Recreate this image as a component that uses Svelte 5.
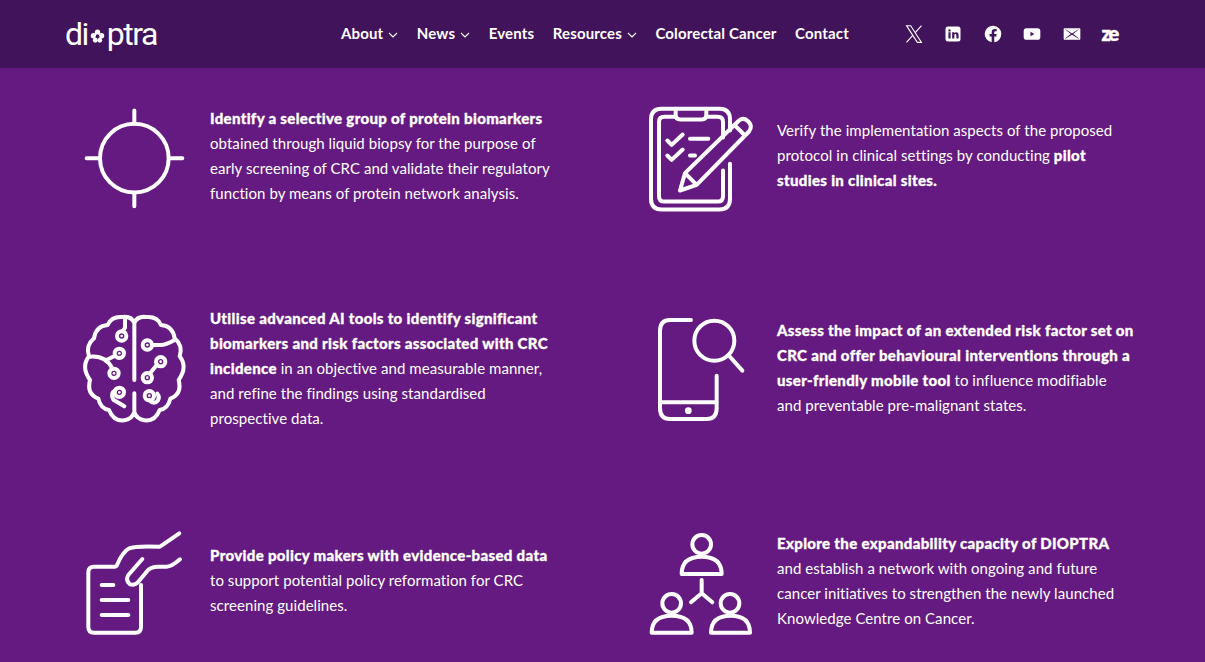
<script>
  const nav = [
    { label: 'About', more: true },
    { label: 'News', more: true },
    { label: 'Events' },
    { label: 'Resources', more: true },
    { label: 'Colorectal Cancer' },
    { label: 'Contact' }
  ];
</script>

<div class="page">
  <header class="top">
    <a class="logo" href="#home">
      <span>di</span>
      <svg class="flower" viewBox="0 0 20 20" aria-hidden="true">
        <circle cx="10" cy="4.400" r="3.600" /><circle cx="4.600" cy="9" r="3.600" /><circle cx="15.400" cy="9" r="3.600" /><circle cx="7" cy="15" r="3.200" /><circle cx="13" cy="15" r="3.200" />
        <circle class="hole" cx="10" cy="9.600" r="2.400" />
      </svg>
      <span>ptra</span>
    </a>
    <nav class="menu">
      {#each nav as item}
        <a href="#item">{item.label}{#if item.more}<svg class="chev" viewBox="0 0 10 6" aria-hidden="true"><path d="M1 1l4 4 4-4" /></svg>{/if}</a>
      {/each}
    </nav>
    <div class="social">
      <svg viewBox="0 0 24 24" class="line"><path d="M3 2l13 20h5L8 2zM3 22l8-9M21 2l-8 9" /></svg>
      <svg viewBox="0 0 24 24"><path fill-rule="evenodd" d="M6 3h12a3 3 0 0 1 3 3v12a3 3 0 0 1-3 3H6a3 3 0 0 1-3-3V6a3 3 0 0 1 3-3zM6.500 10v7.500h2.600V10zM7.800 6.200a1.450 1.450 0 1 0 0 2.900 1.450 1.450 0 0 0 0-2.900zM11 10v7.500h2.600v-4c0-1 .5-1.600 1.300-1.600s1.200.6 1.200 1.600v4h2.600v-4.600c0-2-1.100-3.100-2.800-3.100-1 0-1.800.4-2.300 1.200V10z" /></svg>
      <svg viewBox="0 0 24 24"><path d="M22 12a10 10 0 1 0-11.600 9.900v-7H7.900V12h2.500V9.800c0-2.500 1.500-3.900 3.800-3.900 1.100 0 2.200.2 2.200.2v2.500h-1.300c-1.200 0-1.600.8-1.600 1.600V12h2.800l-.4 2.900h-2.400v7A10 10 0 0 0 22 12z" /></svg>
      <svg viewBox="0 0 24 24"><path fill-rule="evenodd" d="M5.500 5h13A3.500 3.500 0 0 1 22 8.500v7a3.500 3.500 0 0 1-3.500 3.500h-13A3.500 3.500 0 0 1 2 15.500v-7A3.500 3.500 0 0 1 5.500 5zM10.200 9.300v5.400l4.600-2.700z" /></svg>
      <svg viewBox="0 0 24 24"><path fill-rule="evenodd" d="M3 5h18a1 1 0 0 1 1 1v12a1 1 0 0 1-1 1H3a1 1 0 0 1-1-1V6a1 1 0 0 1 1-1zM4 6.500l6.500 5.500L4 17.200v.3h.6L12 13l7.400 4.500h.6v-.3L13.500 12 20 6.500h-.7L12 11.500 4.700 6.500z" /></svg>
      <span class="ze">ze</span>
    </div>
  </header>

  <main class="grid">
    <section class="item">
      <svg class="ico" viewBox="30 16.500 330 330">
        <circle cx="193" cy="188" r="103" />
        <path d="M193 45V85M193 292V332M50 188H88M298 188H337" />
      </svg>
      <p><b>Identify a selective group of protein biomarkers</b><br />obtained through liquid biopsy for the purpose of<br />early screening of CRC and validate their regulatory<br />function by means of protein network analysis.</p>
    </section>

    <section class="item">
      <svg class="ico" viewBox="36 16.500 330 330">
        <path d="M285 105V72Q285 40 253 40H80Q48 40 48 72V310Q48 342 80 342H253Q285 342 285 310V205" />
        <path d="M122 64H88Q72 64 72 80V302Q72 318 88 318H248Q264 318 264 302V225M214 64H248Q264 64 264 80V126" />
        <path d="M122 40V58Q122 72 136 72H200Q214 72 214 58V40" />
        <path d="M97 135L110 148L143 117M97 180L110 193L143 162M165 130H220M165 180H180" />
        <path d="M135 285L150 233L312 75Q326 64 340 78Q354 92 342 108L185 268ZM298 88L330 120M150 233L185 268" />
      </svg>
      <p>Verify the implementation aspects of the proposed<br />protocol in clinical settings by conducting <b>pilot<br />studies in clinical sites.</b></p>
    </section>

    <section class="item">
      <svg class="ico" viewBox="30 24 330 330">
        <path d="M193 54V225M193 265V322M193 54Q185 33 158 36Q124 33 113 60Q78 62 72 100Q46 122 57 154Q32 186 60 225Q49 267 85 281Q92 312 117 315Q131 350 163 346Q185 343 193 322Q201 343 223 346Q255 350 269 315Q294 312 301 281Q337 267 326 225Q354 186 329 154Q340 122 314 100Q308 62 273 60Q262 33 228 36Q201 33 193 54Z" />
        <circle cx="155" cy="93" r="14" /><circle cx="148" cy="145" r="14" /><circle cx="132" cy="205" r="14" /><circle cx="148" cy="262" r="14" />
        <circle cx="232" cy="120" r="14" /><circle cx="272" cy="170" r="14" /><circle cx="232" cy="218" r="14" /><circle cx="238" cy="272" r="14" />
        <path d="M165 42V68L158 79M135 152L108 166M58 155Q108 150 127 191M136 256Q120 265 130 284L163 304M246 120H268Q285 122 312 106M261 179L240 205M238 286Q252 300 264 286Q270 276 262 266" />
        <g class="dots"><circle cx="155" cy="93" r="4" /><circle cx="148" cy="145" r="4" /><circle cx="132" cy="205" r="4" /><circle cx="148" cy="262" r="4" /><circle cx="232" cy="120" r="4" /><circle cx="272" cy="170" r="4" /><circle cx="232" cy="218" r="4" /><circle cx="238" cy="272" r="4" /></g>
      </svg>
      <p><b>Utilise advanced AI tools to identify significant<br />biomarkers and risk factors associated with CRC<br />incidence</b> in an objective and measurable manner,<br />and refine the findings using standardised<br />prospective data.</p>
    </section>

    <section class="item">
      <svg class="ico" viewBox="36 24 330 330">
        <path d="M168 45H105Q75 45 75 78V310Q75 342 105 342H215Q245 342 245 310V212M78 292H243" />
        <circle cx="238" cy="107" r="60" />
        <path d="M280 150L322 197" />
        <circle class="solid" cx="160" cy="317" r="10" />
      </svg>
      <p><b>Assess the impact of an extended risk factor set on<br />CRC and offer behavioural interventions through a<br />user-friendly mobile tool</b> to influence modifiable<br />and preventable pre-malignant states.</p>
    </section>

    <section class="item">
      <svg class="ico" viewBox="30 3 330 330">
        <path d="M135 125H72Q55 125 55 142V306Q55 323 72 323H196Q213 323 213 306V180M95 180H130M95 225H175M95 270H175" />
        <path d="M140 122Q158 80 178 70Q195 62 270 65L328 25M217 102L175 150Q165 165 180 178Q195 182 205 170L230 140Q240 125 265 125H290Q305 125 330 103" />
      </svg>
      <p><b>Provide policy makers with evidence-based data</b><br />to support potential policy reformation for CRC<br />screening guidelines.</p>
    </section>

    <section class="item">
      <svg class="ico" viewBox="36 3 330 330">
        <circle cx="200" cy="58" r="28" /><path d="M140 147Q140 95 200 95Q260 95 260 147Z" />
        <circle cx="110" cy="235" r="28" /><path d="M50 323Q50 272 110 272Q170 272 170 323Z" />
        <circle cx="285" cy="235" r="28" /><path d="M228 323Q228 272 287 272Q345 272 345 323Z" />
        <path d="M200 165V205M200 205L168 232M200 205L232 232" />
      </svg>
      <p><b>Explore the expandability capacity of DIOPTRA</b><br />and establish a network with ongoing and future<br />cancer initiatives to strengthen the newly launched<br />Knowledge Centre on Cancer.</p>
    </section>
  </main>
</div>

<style>
  :global(body) {
    margin: 0;
    background: #641a80;
  }
  .page {
    height: 662px;
    overflow: hidden;
    background: #641a80;
    color: #fff;
    font-family: Lato, "Noto Sans", sans-serif;
  }
  .top {
    display: flex;
    align-items: center;
    height: 68px;
    padding-left: 65px;
    background: #40135a;
  }
  .logo {
    display: flex;
    flex: none;
    align-items: center;
    width: 91px;
    color: #fff;
    text-decoration: none;
    font-family: Roboto, sans-serif;
    font-size: 32px;
    line-height: 1;
    letter-spacing: -1.500px;
  }
  .flower {
    flex: none;
    width: 15px;
    height: 15px;
    margin: 4px 2px 0 2px;
    fill: #fff;
  }
  .hole {
    fill: #40135a;
  }
  .menu {
    display: flex;
    gap: 18.500px;
    margin-left: 185px;
    margin-top: -3px;
  }
  .menu a {
    display: flex;
    align-items: center;
    color: #fff;
    text-decoration: none;
    font-size: 15px;
    font-weight: 700;
    letter-spacing: 0.15px;
    white-space: nowrap;
  }
  .chev {
    width: 10px;
    height: 6px;
    margin: 4px 0 0 5px;
    fill: none;
    stroke: #fff;
    stroke-width: 1.200;
  }
  .social {
    display: flex;
    align-items: center;
    gap: 19.500px;
    margin-left: 55px;
  }
  .social svg {
    width: 20px;
    height: 20px;
    fill: #fff;
  }
  .social .line {
    fill: none;
    stroke: #fff;
    stroke-width: 1.300;
  }
  .ze {
    width: 20px;
    margin: -3px 0 0 -2px;
    font-size: 20px;
    font-weight: 900;
    line-height: 1;
    letter-spacing: -2px;
    text-align: center;
    -webkit-text-stroke: 0.4px #fff;
  }
  .grid {
    display: grid;
    grid-template-columns: 527px 527px;
    grid-auto-rows: 125px;
    column-gap: 40px;
    row-gap: 87.500px;
    padding: 25px 0 0 80px;
  }
  .item {
    display: flex;
    align-items: center;
    gap: 20px;
  }
  .ico {
    flex: none;
    width: 110px;
    height: 110px;
    overflow: visible;
    fill: none;
    stroke: #fff;
    stroke-width: 12;
    stroke-linecap: round;
    stroke-linejoin: round;
  }
  .ico .solid,
  .ico .dots {
    fill: #fff;
    stroke: none;
  }
  p {
    margin: 0;
    font-size: 15px;
    line-height: 25px;
    letter-spacing: 0.06px;
    white-space: nowrap;
  }
  b {
    font-weight: 900;
    letter-spacing: 0.33px;
    -webkit-text-stroke: 0.3px #fff;
  }
</style>
